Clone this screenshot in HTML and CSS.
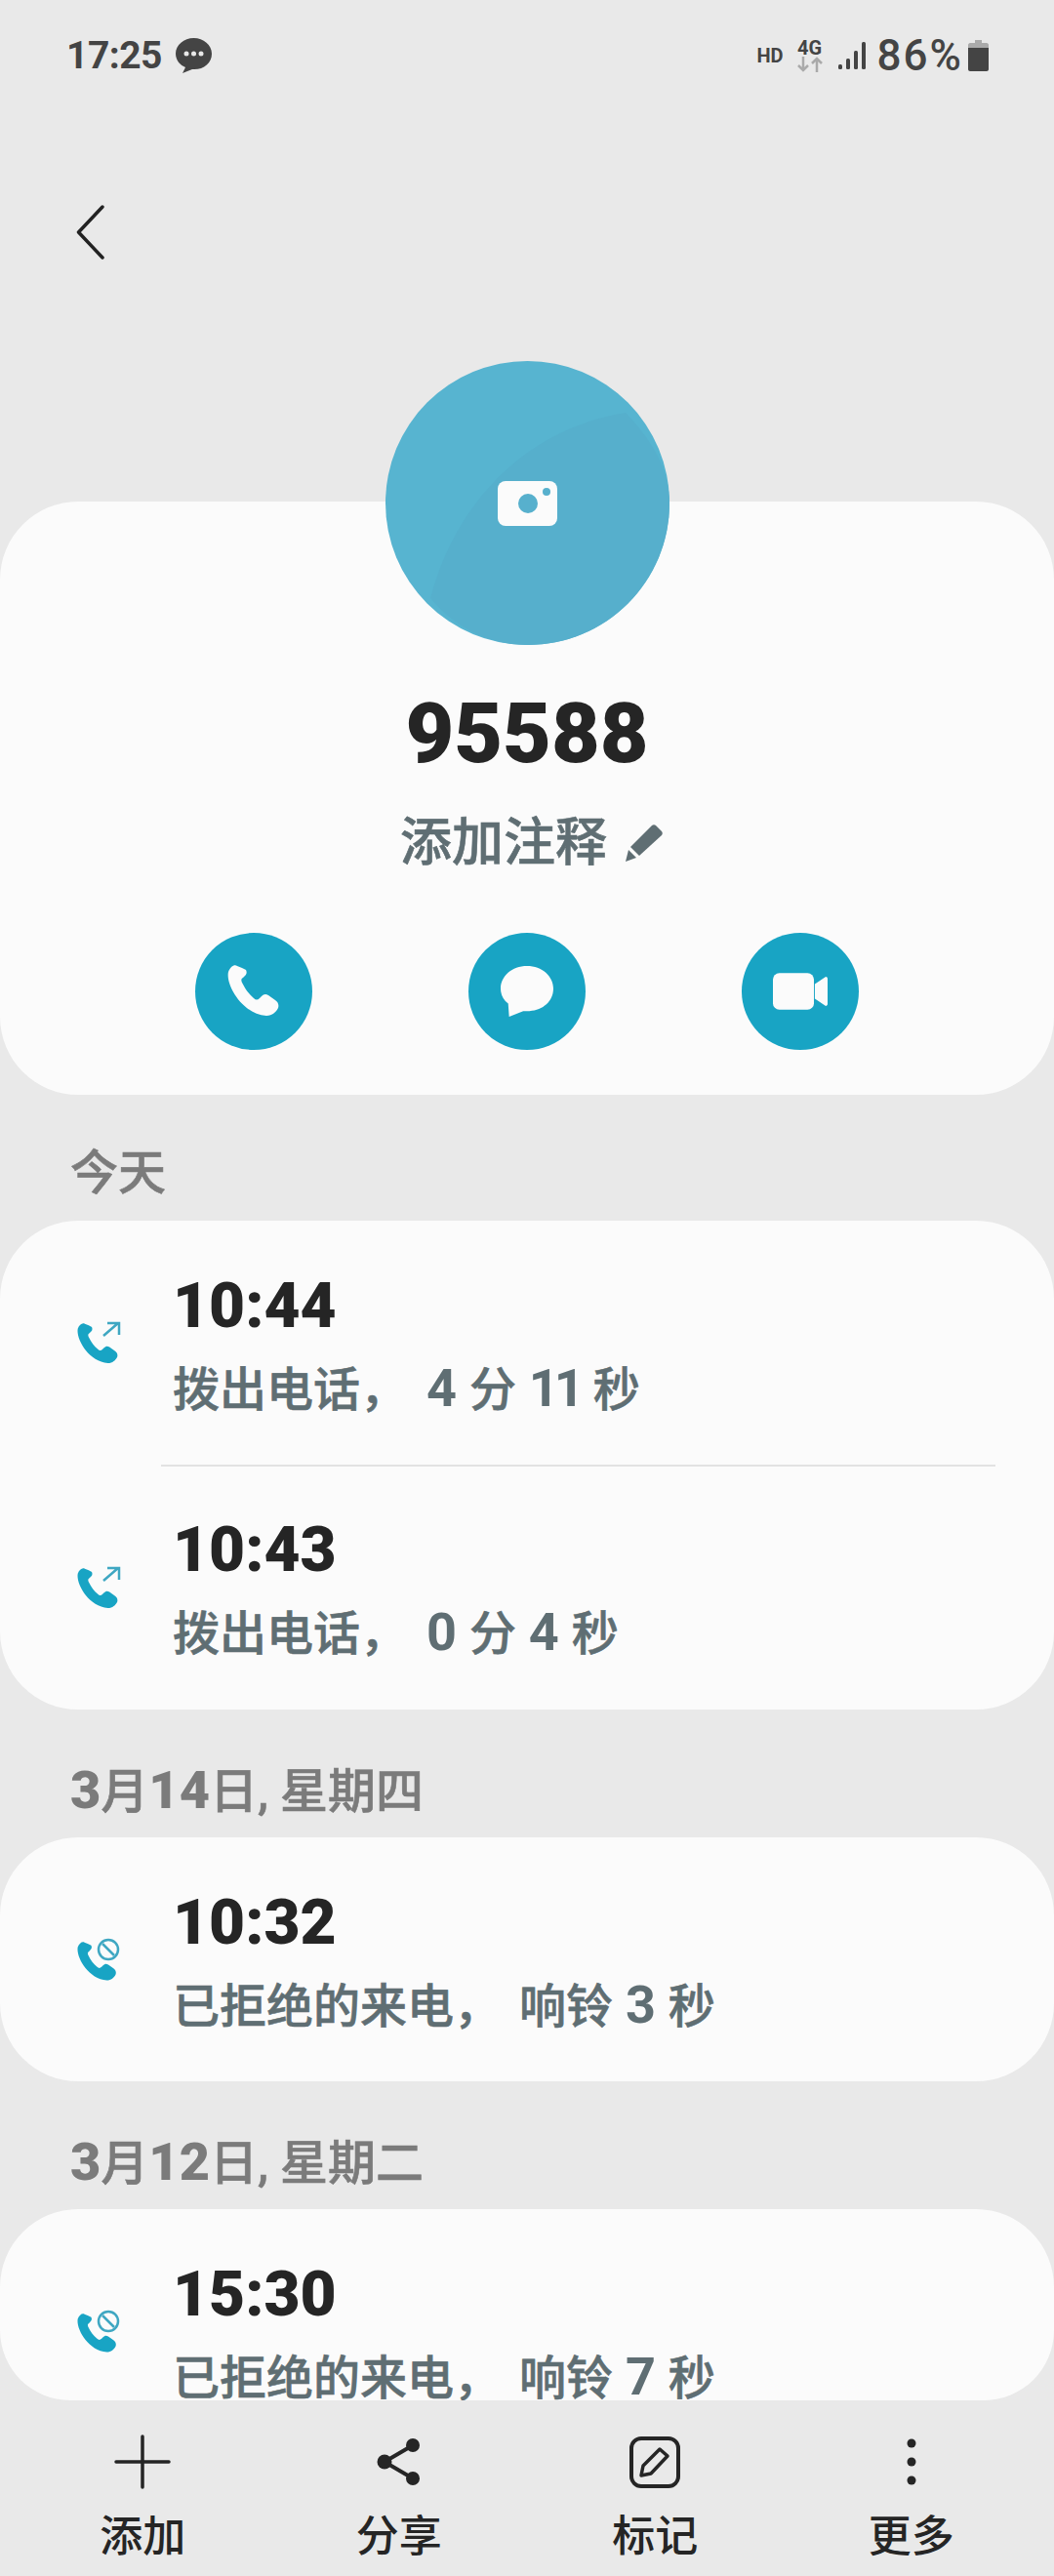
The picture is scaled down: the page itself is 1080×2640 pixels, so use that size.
FILE: index.html
```html
<!DOCTYPE html>
<html lang="zh-CN">
<head>
  <meta charset="UTF-8">
  <title>95588</title>
  <link rel="stylesheet" href="styles.css">
</head>
<body>
  <svg class="defs">
    <defs>
      <path id="handset" d="M10 1C7-1 3 2 1 7C-2 19 14 50 40 52C46 52 50 48 52 44C53 41 52 38 49 36L42 31C39 29 37 30 35 32L33 34C31 36 29 36 27 34C22 30 18 24 15 18C14 16 14 14 16 13L18 11C20 9 20 7 19 5L15 3Z"/>
    </defs>
  </svg>

  <div class="screen">
    <div class="scroll">
      <div class="status">
        <div class="status-left">
          <span class="clock">17:25</span>
          <svg class="status-bubble" viewBox="0 0 37 36">
            <path fill="#444" d="M18.500 0C8.500 0 0 7 0 16C0 23 5 28 10 30L7 36L17 32C28 33 37 26 37 16C37 7 28.500 0 18.500 0Z"/>
            <circle cx="11" cy="16" r="2.500" fill="#e9e9e9"/>
            <circle cx="18.500" cy="16" r="2.500" fill="#e9e9e9"/>
            <circle cx="26" cy="16" r="2.500" fill="#e9e9e9"/>
          </svg>
        </div>
        <div class="status-right">
          <span class="hd">HD</span>
          <div class="net">
            <span class="net-label">4G</span>
            <svg class="net-arrows" viewBox="0 0 26 16">
              <path d="M6 0V14M1 9L6 14L11 9M20 16V2M15 7L20 2L25 7" fill="none" stroke="#aaa" stroke-width="2.500"/>
            </svg>
          </div>
          <svg class="signal" viewBox="0 0 28 28">
            <rect x="0" y="23" width="4" height="5" rx="1.500" fill="#444"/>
            <rect x="8" y="17" width="4" height="11" rx="1.500" fill="#444"/>
            <rect x="16" y="9" width="4" height="19" rx="1.500" fill="#444"/>
            <rect x="24" y="0" width="4" height="28" rx="1.500" fill="#444"/>
          </svg>
          <span class="battery-text">86%</span>
          <svg class="battery" viewBox="0 0 21 32">
            <path d="M7 0H14V3H19C20 3 21 4 21 5V9H0V5C0 4 1 3 2 3H7Z" fill="#aaa"/>
            <path d="M0 8H21V30C21 31 20 32 19 32H2C1 32 0 31 0 30Z" fill="#444"/>
          </svg>
        </div>
      </div>

      <div class="toolbar">
        <svg class="back" viewBox="0 0 32 58">
          <path d="M28 3L3.500 29L28 55" fill="none" stroke="#222" stroke-width="3.500" stroke-linecap="round" stroke-linejoin="round"/>
        </svg>
      </div>

      <div class="profile">
        <svg class="avatar" viewBox="0 0 291 291">
          <circle cx="145.500" cy="145.500" r="145.500" fill="#57b4d0"/>
          <path d="M46 243C70 150 140 70 246 53C272 80 291 110 291 146C291 226 226 291 146 291C105 291 70 272 46 243Z" fill="#56afcc"/>
          <rect x="115" y="123" width="61" height="46" rx="8" fill="#fbfbfb"/>
          <circle cx="146" cy="146" r="10" fill="#57b0cd"/>
          <circle cx="165" cy="134" r="4" fill="#57b0cd"/>
        </svg>
        <div class="name">95588</div>
        <div class="note">
          <span>添加注释</span>
          <svg class="note-pencil" viewBox="0 0 40 40">
            <path d="M28 2C29 1 31 1 32 2L38 8C39 9 39 11 38 12L15 33L6 24Z" fill="#5f6e73"/>
            <path d="M4 27L12 35L1 39Z" fill="#5f6e73"/>
          </svg>
        </div>
        <div class="actions">
          <div class="action">
            <svg class="action-icon" viewBox="0 0 54 54"><use href="#handset" fill="#fbfbfb"/></svg>
          </div>
          <div class="action">
            <svg class="action-icon" viewBox="0 0 58 56">
              <path d="M29 1C13 1 1 12 1 25C1 32 4 37 9 41L10 55L25 49C26 49 28 49 29 49C45 49 57 39 57 25C57 12 45 1 29 1Z" fill="#fbfbfb"/>
            </svg>
          </div>
          <div class="action">
            <svg class="action-icon" viewBox="0 0 60 42">
              <rect x="0" y="1" width="45" height="40" rx="7" fill="#fbfbfb"/>
              <path d="M46 13L58 5C59 5 60 6 60 7V35C60 36 59 37 58 37L46 29Z" fill="#fbfbfb"/>
            </svg>
          </div>
        </div>
      </div>

      <div class="day day-first">今天</div>
      <div class="card">
        <div class="row">
          <svg class="call-icon" viewBox="0 0 45 44">
            <use href="#handset" transform="translate(0,2) scale(.79)" fill="#18a4c4"/>
            <path d="M27 15L42 2M31 2H43V14" fill="none" stroke="#3fa7c2" stroke-width="2.500"/>
          </svg>
          <div class="row-text">
            <div class="time">10:44</div>
            <div class="detail">拨出电话<span class="comma">，</span> <b>4</b> 分 <b class="tight">11</b> 秒</div>
          </div>
        </div>
        <div class="row row-line">
          <svg class="call-icon" viewBox="0 0 45 44">
            <use href="#handset" transform="translate(0,2) scale(.79)" fill="#18a4c4"/>
            <path d="M27 15L42 2M31 2H43V14" fill="none" stroke="#3fa7c2" stroke-width="2.500"/>
          </svg>
          <div class="row-text">
            <div class="time">10:43</div>
            <div class="detail">拨出电话<span class="comma">，</span> <b>0</b> 分 <b>4</b> 秒</div>
          </div>
        </div>
      </div>

      <div class="day"><b>3</b>月<b>14</b>日, 星期四</div>
      <div class="card">
        <div class="row">
          <svg class="call-icon" viewBox="0 0 45 44">
            <use href="#handset" transform="translate(0,4) scale(.76)" fill="#18a4c4"/>
            <circle cx="32" cy="12" r="10" fill="none" stroke="#3fa7c2" stroke-width="2.500"/>
            <path d="M26 6L38 18" stroke="#3fa7c2" stroke-width="2.500"/>
          </svg>
          <div class="row-text">
            <div class="time">10:32</div>
            <div class="detail">已拒绝的来电<span class="comma">，</span> 响铃 <b>3</b> 秒</div>
          </div>
        </div>
      </div>

      <div class="day"><b>3</b>月<b>12</b>日, 星期二</div>
      <div class="card">
        <div class="row">
          <svg class="call-icon" viewBox="0 0 45 44">
            <use href="#handset" transform="translate(0,4) scale(.76)" fill="#18a4c4"/>
            <circle cx="32" cy="12" r="10" fill="none" stroke="#3fa7c2" stroke-width="2.500"/>
            <path d="M26 6L38 18" stroke="#3fa7c2" stroke-width="2.500"/>
          </svg>
          <div class="row-text">
            <div class="time">15:30</div>
            <div class="detail">已拒绝的来电<span class="comma">，</span> 响铃 <b>7</b> 秒</div>
          </div>
        </div>
      </div>
    </div>

    <div class="bottom-nav">
      <div class="nav-item">
        <svg class="nav-icon" viewBox="0 0 60 60">
          <path d="M30 4V56M3 30H57" fill="none" stroke="#252525" stroke-width="3.500" stroke-linecap="round"/>
        </svg>
        <span>添加</span>
      </div>
      <div class="nav-item">
        <svg class="nav-icon" viewBox="0 0 60 60">
          <path d="M44 13L15 30L44 47" fill="none" stroke="#252525" stroke-width="4"/>
          <circle cx="44" cy="13" r="7" fill="#252525"/>
          <circle cx="15" cy="30" r="7.500" fill="#252525"/>
          <circle cx="44" cy="47" r="7" fill="#252525"/>
        </svg>
        <span>分享</span>
      </div>
      <div class="nav-item">
        <svg class="nav-icon" viewBox="0 0 60 60">
          <rect x="6" y="6" width="48" height="49" rx="10" fill="none" stroke="#252525" stroke-width="4"/>
          <path d="M35 17L43 24L26 42L16 44L18 34Z" fill="none" stroke="#252525" stroke-width="3.500" stroke-linejoin="round"/>
        </svg>
        <span>标记</span>
      </div>
      <div class="nav-item">
        <svg class="nav-icon" viewBox="0 0 60 60">
          <circle cx="30" cy="11" r="4.500" fill="#252525"/>
          <circle cx="30" cy="30" r="4.500" fill="#252525"/>
          <circle cx="30" cy="49" r="4.500" fill="#252525"/>
        </svg>
        <span>更多</span>
      </div>
    </div>
  </div>
</body>
</html>
```

FILE: styles.css
```css
body {
  margin: 0;
  background: #e9e9e9;
  font-family: Roboto, "Noto Sans CJK SC", sans-serif;
  color: #252525;
}
.defs {
  display: none;
}
.screen {
  width: 1080px;
  height: 2640px;
  overflow: hidden;
}
.scroll {
  height: 2460px;
  overflow: hidden;
  border-radius: 0 0 72px 72px;
}

/* status bar */
.status {
  height: 114px;
  padding: 0 67px 0 68px;
  box-sizing: border-box;
  display: flex;
  justify-content: space-between;
  align-items: center;
  color: #444;
}
.status-left {
  display: flex;
  align-items: center;
  gap: 14px;
}
.clock {
  font-size: 39px;
  font-weight: 700;
  letter-spacing: -0.5px;
}
.status-bubble {
  width: 37px;
  height: 36px;
}
.status-right {
  display: flex;
  align-items: center;
}
.hd {
  font-size: 20px;
  font-weight: 700;
  margin-right: 14px;
}
.net {
  display: flex;
  flex-direction: column;
  align-items: center;
  width: 26px;
  margin-right: 16px;
}
.net-label {
  font-size: 20px;
  font-weight: 700;
  line-height: 18px;
}
.net-arrows {
  width: 26px;
  height: 16px;
}
.signal {
  width: 28px;
  height: 28px;
  margin-right: 12px;
}
.battery-text {
  font-size: 44px;
  font-weight: 500;
  letter-spacing: 2px;
  margin-right: 5px;
}
.battery {
  width: 21px;
  height: 32px;
}

/* back row */
.toolbar {
  height: 256px;
  padding-left: 77px;
  display: flex;
  align-items: flex-start;
}
.back {
  width: 32px;
  height: 58px;
  margin-top: 95px;
}

/* profile card */
.profile {
  margin-top: 144px;
  height: 608px;
  background: #fbfbfb;
  border-radius: 80px;
  display: flex;
  flex-direction: column;
  align-items: center;
}
.avatar {
  width: 291px;
  height: 291px;
  margin-top: -144px;
  flex-shrink: 0;
}
.name {
  font-size: 86px;
  font-weight: 900;
  line-height: 100px;
  margin-top: 41px;
}
.note {
  display: flex;
  align-items: center;
  gap: 18px;
  font-size: 53px;
  font-weight: 500;
  -webkit-text-stroke: 0.6px #5f6e73;
  line-height: 70px;
  margin: 27px 0 0 10px;
  color: #5f6e73;
}
.note-pencil {
  width: 40px;
  height: 40px;
}
.actions {
  display: flex;
  gap: 160px;
  margin-top: 57px;
}
.action {
  width: 120px;
  height: 120px;
  border-radius: 50%;
  background: #18a4c4;
  display: flex;
  justify-content: center;
  align-items: center;
}
.action-icon {
  width: 56px;
  height: 54px;
}

/* call log */
.day {
  box-sizing: border-box;
  height: 131px;
  padding: 55px 0 0 72px;
  font-size: 49px;
  line-height: 56px;
  font-weight: 500;
  -webkit-text-stroke: 0.6px #7b7b7b;
  color: #7b7b7b;
  white-space: nowrap;
}
.day b {
  font-size: 54px;
  font-weight: 900;
  -webkit-text-stroke: 0;
}
.day-first {
  height: 129px;
  padding-top: 53px;
}
.card {
  background: #fbfbfb;
  border-radius: 80px;
}
.row {
  display: flex;
  align-items: center;
  height: 250px;
  box-sizing: border-box;
  padding-left: 79px;
}
.row-line {
  position: relative;
  height: 251px;
}
.row-line::before {
  content: "";
  position: absolute;
  top: 0;
  left: 165px;
  right: 60px;
  height: 2px;
  background: #e2e2e2;
}
.call-icon {
  width: 45px;
  height: 44px;
  margin-right: 53px;
}
.row-text {
  padding-top: 9px;
}
.time {
  font-size: 64px;
  font-weight: 900;
  line-height: 76px;
}
.detail {
  font-size: 48px;
  font-weight: 500;
  -webkit-text-stroke: 0.6px #5f6e73;
  line-height: 72px;
  margin-top: 10px;
  color: #5f6e73;
  white-space: nowrap;
}
.detail b {
  font-size: 54px;
  font-weight: 700;
  -webkit-text-stroke: 0;
  margin: 0 1px;
}
.detail .tight {
  letter-spacing: -5px;
  margin-right: 2px;
}
.comma {
  margin-right: 7px;
}

/* bottom nav */
.bottom-nav {
  height: 180px;
  padding: 33px 15px 0;
  box-sizing: border-box;
  display: grid;
  grid-template-columns: repeat(4, 1fr);
}
.nav-item {
  display: flex;
  flex-direction: column;
  align-items: center;
  font-size: 44px;
  font-weight: 500;
  line-height: 56px;
}
.nav-icon {
  width: 60px;
  height: 60px;
  margin-bottom: 19px;
}
```
